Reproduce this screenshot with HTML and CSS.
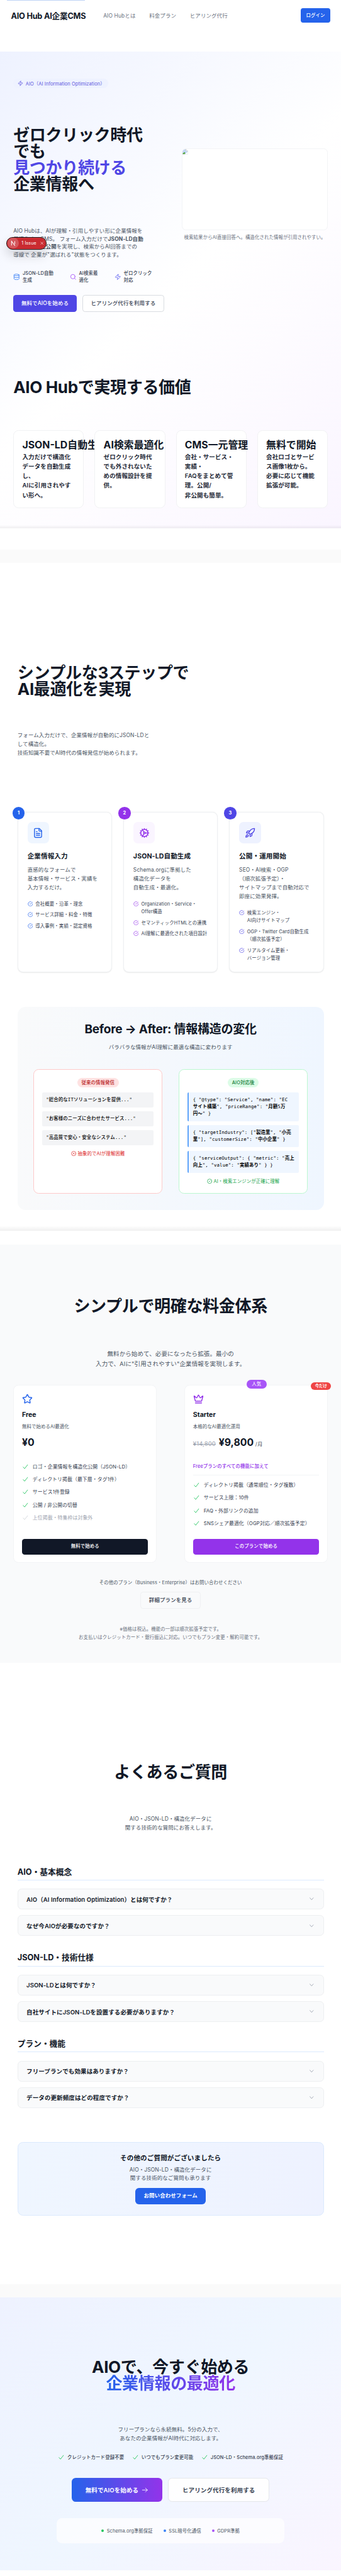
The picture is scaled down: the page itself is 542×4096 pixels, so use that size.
FILE: index.html
```html
<!DOCTYPE html>
<html lang="ja">
<head>
<meta charset="utf-8">
<title>AIO Hub AI企業CMS</title>
<link rel="stylesheet" href="styles.css">
</head>
<body>
<svg class="sprite" aria-hidden="true">
  <symbol id="zap" viewBox="0 0 24 24"><path d="M4 14a1 1 0 0 1-.78-1.63l9.9-10.2a.5.5 0 0 1 .86.46l-1.92 6.02A1 1 0 0 0 13 10h7a1 1 0 0 1 .78 1.63l-9.9 10.2a.5.5 0 0 1-.86-.46l1.92-6.02A1 1 0 0 0 11 14z"/></symbol>
  <symbol id="database" viewBox="0 0 24 24"><ellipse cx="12" cy="5" rx="9" ry="3"/><path d="M3 5v14a9 3 0 0 0 18 0V5"/><path d="M3 12a9 3 0 0 0 18 0"/></symbol>
  <symbol id="search" viewBox="0 0 24 24"><circle cx="11" cy="11" r="8"/><path d="m21 21-4.3-4.3"/></symbol>
  <symbol id="file" viewBox="0 0 24 24"><path d="M15 2H6a2 2 0 0 0-2 2v16a2 2 0 0 0 2 2h12a2 2 0 0 0 2-2V7Z"/><path d="M14 2v4a2 2 0 0 0 2 2h4M10 9H8M16 13H8M16 17H8"/></symbol>
  <symbol id="cog" viewBox="0 0 24 24"><circle cx="12" cy="12" r="8"/><circle cx="12" cy="12" r="2"/><path d="M12 2v2M12 22v-2M17 20.66l-1-1.73M11 10.27 7 3.34M20.66 17l-1.73-1M3.34 7l1.73 1M14 12h8M2 12h2M20.66 7l-1.73 1M3.34 17l1.73-1M17 3.34l-1 1.73M11 13.73l-4 6.93"/></symbol>
  <symbol id="rocket" viewBox="0 0 24 24"><path d="M4.5 16.5c-1.5 1.26-2 5-2 5s3.74-.5 5-2c.71-.84.7-2.13-.09-2.91a2.18 2.18 0 0 0-2.91-.09z"/><path d="m12 15-3-3a22 22 0 0 1 2-3.95A12.88 12.88 0 0 1 22 2c0 2.72-.78 7.5-6 11a22.35 22.35 0 0 1-4 2z"/><path d="M9 12H4s.55-3.03 2-4c1.62-1.08 5 0 5 0M12 15v5s3.03-.55 4-2c1.08-1.62 0-5 0-5"/></symbol>
  <symbol id="done" viewBox="0 0 24 24"><path d="M22 11.08V12a10 10 0 1 1-5.93-9.14"/><path d="m9 11 3 3L22 4"/></symbol>
  <symbol id="star" viewBox="0 0 24 24"><path d="M11.525 2.295a.53.53 0 0 1 .95 0l2.31 4.679a2.123 2.123 0 0 0 1.595 1.16l5.166.756a.53.53 0 0 1 .294.904l-3.736 3.638a2.123 2.123 0 0 0-.611 1.878l.882 5.14a.53.53 0 0 1-.771.56l-4.618-2.428a2.122 2.122 0 0 0-1.973 0L6.396 21.01a.53.53 0 0 1-.77-.56l.881-5.139a2.122 2.122 0 0 0-.611-1.879L2.16 9.795a.53.53 0 0 1 .294-.906l5.165-.755a2.122 2.122 0 0 0 1.597-1.16z"/></symbol>
  <symbol id="crown" viewBox="0 0 24 24"><path d="M11.562 3.266a.5.5 0 0 1 .876 0L15.39 8.87a1 1 0 0 0 1.516.294L21.183 5.5a.5.5 0 0 1 .798.519l-2.834 10.246a1 1 0 0 1-.956.734H5.81a1 1 0 0 1-.957-.734L2.02 6.02a.5.5 0 0 1 .798-.519l4.276 3.664a1 1 0 0 0 1.516-.294z"/><path d="M5 21h14"/></symbol>
  <symbol id="check" viewBox="0 0 24 24"><path d="M20 5 9.5 18.5 4 13"/></symbol>
  <symbol id="cross" viewBox="0 0 24 24"><path d="M18 6 6 18M6 6l12 12"/></symbol>
  <symbol id="circle-x" viewBox="0 0 24 24"><circle cx="12" cy="12" r="10"/><path d="m14.5 9.5-5 5M9.5 9.5l5 5"/></symbol>
  <symbol id="circle-ok" viewBox="0 0 24 24"><circle cx="12" cy="12" r="10"/><path d="m9.5 12.3 1.8 1.8 3.4-4"/></symbol>
  <symbol id="down" viewBox="0 0 24 24"><path d="m6 8.5 6 7 6-7"/></symbol>
  <symbol id="arrow" viewBox="0 0 24 24"><path d="M3 12h18M14 5l7 7-7 7"/></symbol>
</svg>

<div class="page">
  <header class="header">
    <span class="logo">AIO Hub AI企業CMS</span>
    <nav class="nav"><a>AIO Hubとは</a><a>料金プラン</a><a>ヒアリング代行</a></nav>
    <a class="login">ログイン</a>
    <span class="skip"></span>
  </header>

  <section class="hero">
    <div class="hero-grid">
      <div class="hero-left">
        <span class="tag"><svg class="i i18"><use href="#zap"/></svg>AIO（AI Information Optimization）</span>
        <h1 class="display hero-title">ゼロクリック時代<br>でも<br><span class="indigo">見つかり続ける</span><br>企業情報へ</h1>
        <p class="lead">AIO Hubは、AIが理解・引用しやすい形に企業情報を<br>最適化するCMS。 フォーム入力だけで<b>JSON-LD自動</b><br><b>生成・構造化公開</b>を実現し、検索からAI回答までの<br>導線で 企業が"選ばれる"状態をつくります。</p>
        <div class="points">
          <div class="point"><svg class="i i20 blue"><use href="#database"/></svg><span>JSON-LD自動<br>生成</span></div>
          <div class="point"><svg class="i i20 violet"><use href="#search"/></svg><span>AI検索最<br>適化</span></div>
          <div class="point"><svg class="i i20 iris"><use href="#zap"/></svg><span>ゼロクリック<br>対応</span></div>
        </div>
        <div class="hero-actions"><a class="btn btn-indigo">無料でAIOを始める</a><a class="btn btn-line">ヒアリング代行を利用する</a></div>
      </div>
      <div class="hero-right">
        <div class="shot">
          <svg class="broken" viewBox="0 0 16 16"><path d="M.5.5h10l5 5v10H.5z" fill="#fff" stroke="#a9adb3"/><path d="M1 1h9v5h5v3l-6 6H1z" fill="#c3d7f7"/><path d="M1 15v-2l5-4 3 3-3 3z" fill="#55a83c"/><path d="M10.500 .5v5h5" fill="#fff" stroke="#a9adb3"/><path d="m8 16 8-8v8z" fill="#fff"/></svg>
        </div>
        <p class="caption">検索結果からAI直接回答へ。構造化された情報が引用されやすい。</p>
      </div>
    </div>
    <h2 class="display values-title">AIO Hubで実現する価値</h2>
    <div class="values">
      <article class="value"><h3>JSON-LD自動生成</h3><p>入力だけで構造化<br>データを自動生成<br>し、<br>AIに引用されやす<br>い形へ。</p></article>
      <article class="value"><h3>AI検索最適化</h3><p>ゼロクリック時代<br>でも外されないた<br>めの情報設計を提<br>供。</p></article>
      <article class="value"><h3>CMS一元管理</h3><p>会社・サービス・<br>実績・<br>FAQをまとめて管<br>理。公開/<br>非公開も簡単。</p></article>
      <article class="value"><h3>無料で開始</h3><p>会社ロゴとサービ<br>ス画像1枚から。<br>必要に応じて機能<br>拡張が可能。</p></article>
    </div>
    <div class="issue"><span class="issue-n"><svg viewBox="0 0 24 24"><path d="M7.500 18V6l9.500 12.500M16.500 6v8" fill="none" stroke="#fff" stroke-width="1.800"/></svg></span><span>1 Issue</span><svg class="i i14"><use href="#cross"/></svg></div>
  </section>

  <div class="strip strip-a"></div>

  <section class="steps">
    <h2 class="display">シンプルな3ステップで<br>AI最適化を実現</h2>
    <p class="steps-lead">フォーム入力だけで、企業情報が自動的にJSON-LDと<br>して構造化。<br>技術知識不要でAI時代の情報発信が始められます。</p>
    <div class="step-grid">
      <article class="step s-blue">
        <span class="num">1</span>
        <div class="step-icon"><svg class="i i32"><use href="#file"/></svg></div>
        <h3>企業情報入力</h3>
        <p>直感的なフォームで<br>基本情報・サービス・実績を<br>入力するだけ。</p>
        <ul>
          <li><svg class="i i16"><use href="#done"/></svg><span>会社概要・沿革・理念</span></li>
          <li><svg class="i i16"><use href="#done"/></svg><span>サービス詳細・料金・特徴</span></li>
          <li><svg class="i i16"><use href="#done"/></svg><span>導入事例・実績・認定資格</span></li>
        </ul>
      </article>
      <article class="step s-purple">
        <span class="num">2</span>
        <div class="step-icon"><svg class="i i32"><use href="#cog"/></svg></div>
        <h3>JSON-LD自動生成</h3>
        <p>Schema.orgに準拠した<br>構造化データを<br>自動生成・最適化。</p>
        <ul>
          <li><svg class="i i16"><use href="#done"/></svg><span>Organization・Service・<br>Offer構造</span></li>
          <li><svg class="i i16"><use href="#done"/></svg><span>セマンティックHTMLとの連携</span></li>
          <li><svg class="i i16"><use href="#done"/></svg><span>AI理解に最適化された項目設計</span></li>
        </ul>
      </article>
      <article class="step s-indigo">
        <span class="num">3</span>
        <div class="step-icon"><svg class="i i32"><use href="#rocket"/></svg></div>
        <h3>公開・運用開始</h3>
        <p>SEO・AI検索・OGP<br>（順次拡張予定）・<br>サイトマップまで自動対応で<br>即座に効果発揮。</p>
        <ul>
          <li><svg class="i i16"><use href="#done"/></svg><span>検索エンジン・<br>AI向けサイトマップ</span></li>
          <li><svg class="i i16"><use href="#done"/></svg><span>OGP・Twitter Card自動生成<br>（順次拡張予定）</span></li>
          <li><svg class="i i16"><use href="#done"/></svg><span>リアルタイム更新・<br>バージョン管理</span></li>
        </ul>
      </article>
    </div>
    <div class="compare">
      <h3>Before → After: 情報構造の変化</h3>
      <p class="compare-sub">バラバラな情報がAI理解に最適な構造に変わります</p>
      <div class="compare-grid">
        <div class="panel before">
          <span class="pill">従来の情報発信</span>
          <code>"総合的なITソリューションを提供..."</code>
          <code>"お客様のニーズに合わせたサービス..."</code>
          <code>"高品質で安心・安全なシステム..."</code>
          <p class="verdict"><svg class="i i16"><use href="#circle-x"/></svg>抽象的でAIが理解困難</p>
        </div>
        <div class="panel after">
          <span class="pill">AIO対応後</span>
          <code>{ "@type": "Service", "name": "EC<br><b>サイト構築</b>", "priceRange": "<b>月額</b>5<b>万</b><br><b>円〜</b>" }</code>
          <code>{ "targetIndustry": ["<b>製造業</b>", "<b>小売</b><br><b>業</b>"], "customerSize": "<b>中小企業</b>" }</code>
          <code>{ "serviceOutput": { "metric": "<b>売上</b><br><b>向上</b>", "value": "<b>実績あり</b>" } }</code>
          <p class="verdict"><svg class="i i16"><use href="#circle-ok"/></svg>AI・検索エンジンが正確に理解</p>
        </div>
      </div>
    </div>
  </section>

  <section class="pricing">
    <h2 class="display">シンプルで明確な料金体系</h2>
    <p class="pricing-lead">無料から始めて、必要になったら拡張。最小の<br>入力で、AIに"引用されやすい"企業情報を実現します。</p>
    <div class="plans">
      <article class="plan">
        <svg class="i i32 royal"><use href="#star"/></svg>
        <h3>Free</h3>
        <p class="plan-sub">無料で始めるAI最適化</p>
        <p class="price"><strong>¥0</strong></p>
        <ul>
          <li><svg class="i i20"><use href="#check"/></svg>ロゴ・企業情報を構造化公開（JSON-LD）</li>
          <li><svg class="i i20"><use href="#check"/></svg>ディレクトリ掲載（最下層・タグ1件）</li>
          <li><svg class="i i20"><use href="#check"/></svg>サービス1件登録</li>
          <li><svg class="i i20"><use href="#check"/></svg>公開 / 非公開の切替</li>
          <li class="off"><svg class="i i20"><use href="#check"/></svg>上位掲載・特集枠は対象外</li>
        </ul>
        <a class="plan-btn dark">無料で始める</a>
      </article>
      <article class="plan">
        <span class="badge popular">人気</span><span class="badge now">今だけ</span>
        <svg class="i i32 purple"><use href="#crown"/></svg>
        <h3>Starter</h3>
        <p class="plan-sub">本格的なAI最適化運用</p>
        <p class="price"><s>¥14,800</s><strong>¥9,800</strong><small>/月</small></p>
        <p class="plus">Freeプランのすべての機能に加えて</p>
        <ul>
          <li><svg class="i i20"><use href="#check"/></svg>ディレクトリ掲載（通常順位・タグ複数）</li>
          <li><svg class="i i20"><use href="#check"/></svg>サービス上限：10件</li>
          <li><svg class="i i20"><use href="#check"/></svg>FAQ・外部リンクの追加</li>
          <li><svg class="i i20"><use href="#check"/></svg>SNSシェア最適化（OGP対応／順次拡張予定）</li>
        </ul>
        <a class="plan-btn vivid">このプランで始める</a>
      </article>
    </div>
    <p class="other">その他のプラン（Business・Enterprise）はお問い合わせください</p>
    <a class="detail">詳細プランを見る</a>
    <p class="notes">※価格は税込。機能の一部は順次拡張予定です。<br>お支払いはクレジットカード・銀行振込に対応。いつでもプラン変更・解約可能です。</p>
  </section>

  <section class="faq">
    <h2 class="display">よくあるご質問</h2>
    <p class="faq-lead">AIO・JSON-LD・構造化データに<br>関する技術的な質問にお答えします。</p>
    <div class="groups">
      <div class="group">
        <h3>AIO・基本概念</h3>
        <div class="qa">AIO（AI Information Optimization）とは何ですか？<svg class="i i20"><use href="#down"/></svg></div>
        <div class="qa">なぜ今AIOが必要なのですか？<svg class="i i20"><use href="#down"/></svg></div>
      </div>
      <div class="group">
        <h3>JSON-LD・技術仕様</h3>
        <div class="qa">JSON-LDとは何ですか？<svg class="i i20"><use href="#down"/></svg></div>
        <div class="qa">自社サイトにJSON-LDを設置する必要がありますか？<svg class="i i20"><use href="#down"/></svg></div>
      </div>
      <div class="group">
        <h3>プラン・機能</h3>
        <div class="qa">フリープランでも効果はありますか？<svg class="i i20"><use href="#down"/></svg></div>
        <div class="qa">データの更新頻度はどの程度ですか？<svg class="i i20"><use href="#down"/></svg></div>
      </div>
    </div>
    <div class="ask">
      <h3>その他のご質問がございましたら</h3>
      <p>AIO・JSON-LD・構造化データに<br>関する技術的なご質問も承ります</p>
      <a class="ask-btn">お問い合わせフォーム</a>
    </div>
  </section>

  <div class="strip strip-b"></div>

  <section class="final">
    <h2 class="display">AIOで、今すぐ始める<br><span class="rainbow">企業情報の最適化</span></h2>
    <p class="final-lead">フリープランなら永続無料。5分の入力で、<br>あなたの企業情報がAI時代に対応します。</p>
    <div class="assure">
      <span><svg class="i i20"><use href="#check"/></svg>クレジットカード登録不要</span>
      <span><svg class="i i20"><use href="#check"/></svg>いつでもプラン変更可能</span>
      <span><svg class="i i20"><use href="#check"/></svg>JSON-LD・Schema.org準拠保証</span>
    </div>
    <div class="final-actions"><a class="big big-fill">無料でAIOを始める<svg class="i i20"><use href="#arrow"/></svg></a><a class="big big-line">ヒアリング代行を利用する</a></div>
    <div class="trust"><span class="t-green">Schema.org準拠保証</span><span class="t-blue">SSL暗号化通信</span><span class="t-purple">GDPR準拠</span></div>
  </section>
</div>
</body>
</html>
```
FILE: styles.css
```css
* { box-sizing: border-box; margin: 0; padding: 0; }
html, body { width: 542px; height: 4096px; overflow: hidden; background: #fff; }
body { font-family: Inter, "Noto Sans CJK JP", sans-serif; color: #111827; letter-spacing: .012em; }
ul { list-style: none; }
a { text-decoration: none; color: inherit; }
.sprite { display: none; }

/* The layout is authored at 1024px and scaled down as a whole */
.page { width: 1024px; height: 7734px; zoom: .5296; overflow: hidden; white-space: nowrap; }

.i { flex: none; display: block; fill: none; stroke: currentColor; stroke-width: 2; stroke-linecap: round; stroke-linejoin: round; }
.i14 { width: 14px; height: 14px; }
.i16 { width: 16px; height: 16px; }
.i18 { width: 17px; height: 17px; }
.i20 { width: 20px; height: 20px; }
.i32 { width: 32px; height: 32px; }
.blue { color: #3b82f6; }
.royal { color: #2563eb; }
.violet { color: #a855f7; }
.purple { color: #9333ea; }
.iris { color: #6366f1; }
.indigo { color: #4f46e5; }

.display { font-size: 49.2px; line-height: 49.3px; font-weight: 700; letter-spacing: -.014em; }

/* Header */
.header { position: relative; height: 92px; display: flex; align-items: center; padding: 0 33px; }
.logo { width: 277px; font-size: 24px; font-weight: 700; letter-spacing: -.018em; }
.nav { display: flex; gap: 41px; font-size: 16px; color: #6b7280; flex: 1; }
.login { width: 88px; height: 44px; border-radius: 7px; background: #2563eb; color: #fff; font-size: 14px; font-weight: 500; line-height: 44px; text-align: center; }
.skip { position: absolute; left: 21px; top: 0; width: 233px; height: 1px; background: #bfd3f5; }

/* Hero */
.hero { position: relative; margin-top: 62px; height: 1433px; padding: 82px 40px 0; background: linear-gradient(180deg, transparent 1421px, rgba(0,0,0,.055)), linear-gradient(135deg, #eef2ff 0%, #fff 50%, #faf5ff 100%); }
.hero-grid { display: grid; grid-template-columns: 506px 438px; }
.tag { display: inline-flex; align-items: center; gap: 8px; width: 285px; height: 29px; padding-left: 12px; border-radius: 15px; background: #eef2ff; color: #5b54de; font-size: 14px; }
.hero-title { margin-top: 116px; }
.lead { margin-top: 103px; font-size: 16px; line-height: 24.300px; color: #4b5563; }
.points { margin-top: 32px; display: grid; grid-template-columns: 169px 134px auto; font-size: 14px; font-weight: 500; line-height: 21px; color: #374151; }
.point { display: flex; align-items: center; gap: 8px; }
.hero-actions { display: flex; gap: 17px; margin-top: 32.500px; }
.btn { height: 51px; border-radius: 8px; font-size: 16px; font-weight: 500; line-height: 50px; text-align: center; }
.btn-indigo { width: 190px; background: #4f46e5; color: #fff; }
.btn-line { width: 246px; border: 1px solid #d9dce1; color: #374151; background: #fff; line-height: 48px; }
.shot { margin-top: 210.500px; height: 245.500px; border: 1px solid #f3f4f6; border-radius: 12px; background: #fff; overflow: hidden; }
.broken { display: block; width: 16px; height: 16px; }
.caption { margin-top: 13px; font-size: 14px; line-height: 20px; color: #6b7280; text-align: center; }
.values-title { margin-top: 203px; }
.values { display: grid; grid-template-columns: repeat(4, 212px); gap: 32px; margin-top: 104px; }
.value { position: relative; height: 233px; padding: 22px 25px; border: 1px solid #f1f2f4; border-radius: 16px; background: #fff; }
.value h3 { font-size: 30px; line-height: 42px; font-weight: 700; letter-spacing: 0; }
.value p { margin-top: -.5px; font-size: 18px; line-height: 28.600px; font-weight: 600; color: #1f2937; }
.issue { position: absolute; left: 19px; top: 557px; width: 120px; height: 38px; display: flex; align-items: center; gap: 9px; padding-left: 2px; border: 1px solid #1c1012; border-radius: 19px; background: #ca2a30; box-shadow: inset 0 0 0 1px #e5484d, 0 16px 32px rgba(0,0,0,.16); color: #fff; font-size: 13.500px; }
.issue-n { width: 33px; height: 33px; border-radius: 50%; background: #d4575c; display: grid; place-items: center; }
.issue-n svg { width: 26px; height: 26px; }

.strip { background: #fafafa; }
.strip-a { margin-top: 63px; height: 40px; }
.strip-b { height: 40.600px; }

/* Steps */
.steps { height: 2005px; padding: 305.400px 52.500px 0; background: linear-gradient(180deg, transparent 1990px, rgba(0,0,0,.06)); }
.steps-lead { margin-top: 103px; font-size: 16px; line-height: 25.600px; color: #4b5563; }
.step-grid { display: grid; grid-template-columns: repeat(3, 1fr); gap: 34px; margin-top: 164px; }
.step { position: relative; height: 481.500px; padding: 28px; border: 1px solid #eef0f2; border-radius: 16px; box-shadow: 0 1px 3px rgba(0,0,0,.08); background: #fff; }
.num { position: absolute; left: -17px; top: -17px; width: 37px; height: 37px; border-radius: 50%; background: var(--c); color: #fff; font-size: 14px; font-weight: 700; line-height: 37px; text-align: center; }
.s-blue { --c: #2563eb; --bg: #eff6ff; }
.s-purple { --c: #9333ea; --bg: #faf5ff; }
.s-indigo { --c: #4f46e5; --bg: #eef2ff; }
.step-icon { width: 65px; height: 65px; border-radius: 13px; display: grid; place-items: center; background: var(--bg); color: var(--c); }
.step h3 { margin-top: 25.500px; font-size: 20px; line-height: 28px; font-weight: 700; }
.step p { margin-top: 12px; font-size: 16px; line-height: 26.500px; color: #4b5563; }
.step ul { margin-top: 25.500px; display: grid; gap: 10.500px; font-size: 14px; line-height: 23.100px; color: #374151; }
.step li { display: flex; gap: 8px; }
.step li svg { margin-top: 2px; color: var(--c); }

/* Before / after */
.compare { margin-top: 103.500px; height: 610px; padding: 46px 48px 0; border-radius: 24px; background: linear-gradient(90deg, #f9fafb, #eff6ff); text-align: center; }
.compare h3 { font-size: 36px; line-height: 44px; font-weight: 700; letter-spacing: -.014em; }
.compare-sub { margin-top: 19px; font-size: 16px; line-height: 24px; color: #4b5563; }
.compare-grid { display: grid; grid-template-columns: 1fr 1fr; gap: 49px; margin-top: 54.500px; }
.panel { height: 373px; padding: 23.500px 24px 0; border: 2px solid var(--line); border-radius: 16px; background: #fff; }
.before { --line: #fecaca; --pill: #fee2e2; --ink: #b91c1c; --note: #dc2626; }
.after { --line: #bbf7d0; --pill: #dcfce7; --ink: #15803d; --note: #16a34a; }
.pill { display: block; width: fit-content; margin: 0 auto 16px; padding: 0 12.500px; border-radius: 15px; background: var(--pill); color: var(--ink); font-size: 14px; font-weight: 500; line-height: 29px; }
.panel code { display: block; margin-bottom: 12px; padding: 12px; border-radius: 4px; background: #f3f4f6; color: #000; font: 500 14px/20.700px "DejaVu Sans Mono", "Noto Sans CJK JP", monospace; text-align: left; }
.after code { border-left: 4px solid #60a5fa; background: #eff6ff; padding-left: 13px; font-weight: 400; }
.after code b { font-weight: 600; }
.verdict { display: flex; align-items: center; justify-content: center; gap: 4px; margin-top: 15px; font-size: 14px; line-height: 21px; color: var(--note); }

/* Pricing */
.pricing { margin-top: 42px; height: 1256px; padding: 160.400px 40px 0; background: #f9fafb; text-align: center; }
.pricing-lead { margin-top: 104.400px; font-size: 18px; line-height: 28.800px; color: #4b5563; }
.plans { display: grid; grid-template-columns: 1fr 1fr; gap: 83px; margin-top: 49px; text-align: left; }
.plan { position: relative; display: flex; flex-direction: column; height: 535.500px; padding: 24px; border: 1px solid #f3f4f6; border-radius: 16px; background: #fff; }
.plan h3 { margin-top: 20px; font-size: 20px; line-height: 28px; font-weight: 700; letter-spacing: 0; }
.plan-sub { margin-top: 10px; font-size: 14px; line-height: 22px; color: #4b5563; }
.price { display: flex; align-items: baseline; margin-top: 18px; height: 36px; line-height: 36px; }
.price strong { font-size: 30px; font-weight: 700; letter-spacing: 0; }
.price s { margin-right: 9px; font-size: 18px; color: #9ca3af; }
.price small { margin-left: 5px; font-size: 16px; color: #4b5563; }
.plus { margin-top: 44px; padding-bottom: 14px; border-bottom: 1px solid #f3f4f6; font-size: 14px; font-weight: 500; line-height: 20px; color: #9333ea; }
.plan ul { display: grid; gap: 16px; margin-top: 43.700px; font-size: 14.850px; line-height: 22.600px; color: #374151; }
.plus + ul { margin-top: 19px; }
.plan li { display: flex; gap: 12px; }
.plan li svg { color: #22c55e; }
.plan .off { color: #9ca3af; }
.plan .off svg { color: #d1d5db; }
.plan-btn { margin-top: auto; height: 47px; border-radius: 8px; color: #fff; font-size: 14px; font-weight: 500; line-height: 47px; text-align: center; }
.dark { background: #111827; }
.vivid { background: #9333ea; }
.badge { position: absolute; color: #fff; text-align: center; border-radius: 13px; }
.popular { left: 184px; top: -16px; width: 61px; height: 25px; background: #a855f7; font-size: 14px; line-height: 25px; }
.now { right: -12px; top: -10px; width: 61px; height: 23px; background: #ef4444; font-size: 12px; font-weight: 700; line-height: 23px; }
.other { margin-top: 48px; font-size: 14px; line-height: 22px; color: #4b5563; }
.detail { display: block; width: 181px; height: 50.400px; margin: 16.600px auto 0; border: 1px solid #f0f1f3; border-radius: 8px; font-size: 16px; font-weight: 500; line-height: 47px; color: #374151; }
.notes { margin-top: 49.700px; font-size: 14px; line-height: 24.700px; color: #6b7280; }

/* FAQ */
.faq { height: 1865px; padding: 304.400px 52.500px 0; text-align: center; }
.faq-lead { margin-top: 103.600px; font-size: 16px; line-height: 25.600px; color: #4b5563; }
.groups { display: grid; gap: 51.100px; margin-top: 104px; text-align: left; }
.group { height: 207.100px; }
.group h3 { height: 40px; margin-bottom: 25.500px; border-bottom: 2px solid #dbeafe; font-size: 24px; font-weight: 700; line-height: 30px; letter-spacing: 0; }
.qa { display: flex; align-items: center; justify-content: space-between; height: 62px; margin-bottom: 17.600px; padding: 0 25px; border: 1px solid #edeff1; border-radius: 12px; background: #f9fafb; font-size: 18px; font-weight: 600; }
.qa svg { color: #9ca3af; }
.ask { height: 220.500px; margin-top: 103px; padding-top: 33px; border: 1px solid #dbeafe; border-radius: 16px; background: linear-gradient(90deg, #eff6ff, #eef2ff); }
.ask h3 { font-size: 20px; line-height: 28px; font-weight: 600; }
.ask p { margin-top: 8.500px; font-size: 16px; line-height: 25.200px; color: #4b5563; }
.ask-btn { display: block; width: 211px; height: 49px; margin: 16.400px auto 0; border-radius: 11px; background: #2563eb; color: #fff; font-size: 16px; font-weight: 600; line-height: 49px; }

/* Closing call to action */
.final { height: 819.400px; padding-top: 183.600px; background: linear-gradient(135deg, #eef2ff 0%, #eff6ff 50%, #faf5ff 100%); text-align: center; }
.rainbow { background: linear-gradient(90deg, #2563eb, #9333ea); -webkit-background-clip: text; background-clip: text; color: transparent; }
.final-lead { margin-top: 102px; font-size: 16px; line-height: 26px; color: #4b5563; }
.assure { display: flex; justify-content: center; gap: 24px; margin-top: 33px; font-size: 14px; font-weight: 500; line-height: 22px; color: #374151; }
.assure span { display: flex; align-items: center; gap: 8px; }
.assure svg { color: #22c55e; }
.final-actions { display: flex; justify-content: center; gap: 17px; margin-top: 50px; }
.big { display: flex; align-items: center; justify-content: center; height: 72px; border-radius: 12px; font-size: 18px; font-weight: 600; }
.big-fill { width: 272px; gap: 10px; background: linear-gradient(90deg, #2563eb, #9333ea); color: #fff; }
.big-line { width: 305px; border: 2px solid #e5e7eb; background: rgba(255,255,255,.9); color: #374151; }
.trust { display: flex; align-items: center; justify-content: center; gap: 32px; width: 684px; height: 75px; margin: 49px auto 0; border-radius: 16px; background: rgba(255,255,255,.7); font-size: 14px; color: #4b5563; }
.trust span { display: flex; align-items: center; gap: 8px; }
.trust span::before { content: ""; width: 8px; height: 8px; border-radius: 50%; background: var(--dot); }
.t-green { --dot: #22c55e; }
.t-blue { --dot: #3b82f6; }
.t-purple { --dot: #a855f7; }
```
